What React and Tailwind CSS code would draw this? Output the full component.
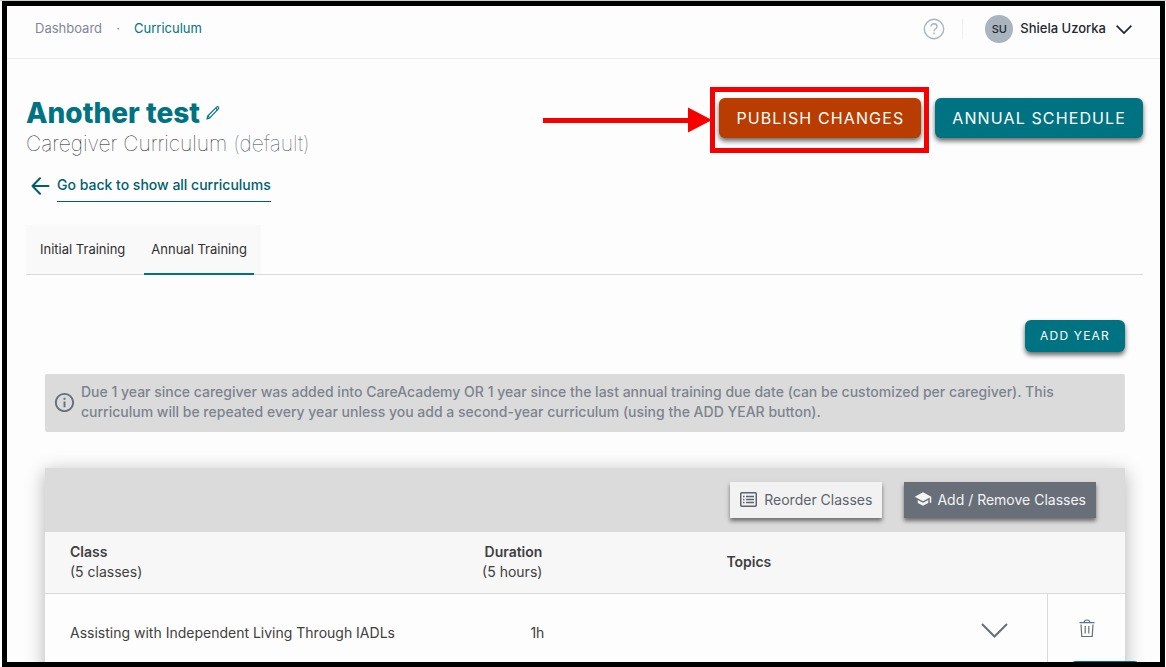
import { useState } from "react";
import { MdInfoOutline, MdSchool } from "react-icons/md";

const TABS = ["Initial Training", "Annual Training"];

const CLASSES = [
  { title: "Assisting with Independent Living Through IADLs", duration: "1h" },
];

function HelpIcon() {
  return (
    <svg width="22" height="22" viewBox="0 0 22 22" fill="none" stroke="currentColor" strokeWidth="1.4" aria-hidden="true">
      <circle cx="11" cy="11" r="9.7" />
      <path d="M8 8.6c0-1.8 1.3-2.9 3-2.9s3 1.1 3 2.7c0 1.4-.8 2-1.7 2.6-.9.6-1.3 1-1.3 2.2" />
      <path d="M11 14.6v1.6" />
    </svg>
  );
}

function ChevronIcon({ className }) {
  return (
    <svg viewBox="0 0 27 15" fill="none" stroke="currentColor" strokeWidth="2" className={className} aria-hidden="true">
      <path d="M1 1l12.5 12.5L26 1" />
    </svg>
  );
}

function PencilIcon() {
  return (
    <svg width="14" height="14" viewBox="0 0 14 14" fill="none" stroke="currentColor" strokeWidth="1.1" strokeLinejoin="round" aria-hidden="true">
      <path d="M.9 13.1l.9-3.1L10.6 1.2c.6-.6 1.3-.6 1.8-.1s.5 1.2-.1 1.8L3.8 11.9z" />
      <path d="M1.8 10l2 1.9M9.7 2.1l1.9 1.9" />
    </svg>
  );
}

function BackIcon() {
  return (
    <svg width="19" height="18" viewBox="0 0 19 18" fill="none" stroke="currentColor" strokeWidth="2" strokeLinecap="round" strokeLinejoin="round" aria-hidden="true">
      <path d="M17.5 9H1.5M9 1.3L1.5 9 9 16.7" />
    </svg>
  );
}

function ListIcon() {
  return (
    <svg width="17" height="15" viewBox="0 0 17 15" fill="none" stroke="currentColor" className="-mt-0.5" aria-hidden="true">
      <rect x=".75" y=".75" width="15.5" height="13.5" rx="1" strokeWidth="1.5" />
      <path d="M6 4.5h8M6 7.5h8M6 10.5h8M3 4.5h1.5M3 7.5h1.5M3 10.5h1.5" strokeWidth="1.4" />
    </svg>
  );
}

function TrashIcon() {
  return (
    <svg width="16" height="19" viewBox="0 0 16 19" fill="none" stroke="currentColor" strokeWidth="1.2" aria-hidden="true">
      <path d="M.5 3.7h15M5 3.5C5.2 1.9 6 1 8 1s2.8.9 3 2.5" />
      <path d="M2 5.5l.8 12h10.4l.8-12" />
      <path d="M6.2 7v7.5M9.8 7v7.5" />
    </svg>
  );
}

function TopBar() {
  return (
    <header className="flex h-[53px] shrink-0 items-center justify-between border-b border-[#ececee] pr-7 pb-1.5 pl-7 text-[13px]">
      <nav className="flex items-center">
        <a href="#dashboard" className="text-[#7f8898]">Dashboard</a>
        <span className="w-8 text-center text-[#7f8898]">·</span>
        <a href="#curriculum" className="text-[#007382]">Curriculum</a>
      </nav>
      <div className="flex items-center font-medium">
        <button type="button" aria-label="Help" className="text-[#a9b4c0]">
          <HelpIcon />
        </button>
        <div className="mr-[22px] ml-[17px] h-5 w-px bg-[#ebedf0]"></div>
        <button type="button" className="flex items-center text-[#23282f]">
          <span className="mr-[7px] flex size-7 items-center justify-center rounded-full bg-[#a9b4bf] text-[11px]">SU</span>
          <span>Shiela Uzorka</span>
          <ChevronIcon className="ml-2.5 h-[9px] w-4 [stroke-width:3]" />
        </button>
      </div>
    </header>
  );
}

// red outline and arrow pointing at the publish button
function Callout() {
  return (
    <div className="pointer-events-none absolute -top-[11px] -right-2 -bottom-[15px] -left-[9px] border-[5px] border-[#f60000]">
      <svg width="169" height="26" viewBox="0 0 169 26" fill="#f60000" className="absolute top-[15px] -left-[172px] max-w-none" aria-hidden="true">
        <path d="M0 11h145V.5L169 13l-24 12.5V16H0z" />
      </svg>
    </div>
  );
}

function PageHeading() {
  return (
    <div className="flex items-start justify-between">
      <div>
        <h1 className="flex items-center gap-1.5 text-[28px] leading-9 font-extrabold text-[#007382]">
          Another test
          <button type="button" aria-label="Edit name">
            <PencilIcon />
          </button>
        </h1>
        <p className="text-[21px] leading-[26px] font-thin text-[#101010]">
          Caregiver Curriculum <span className="text-[#404855]">(default)</span>
        </p>
        <a href="#curriculums" className="mt-[18px] ml-[5px] flex w-fit gap-[7px] text-[#005f6e]">
          <span className="mt-0.5"><BackIcon /></span>
          <span className="border-b border-[#005f6e] pb-[6px] text-sm font-medium">Go back to show all curriculums</span>
        </a>
      </div>
      <div className="mt-[3px] flex gap-[14px] text-base text-white">
        <div className="relative">
          <button type="button" className="h-10 rounded-md bg-[#b93c00] px-[17px] tracking-[0.07em] shadow-[0_3px_5px_rgba(0,0,0,0.6)]">
            PUBLISH CHANGES
          </button>
          <Callout />
        </div>
        <button type="button" className="h-10 rounded-md bg-[#007382] px-[17px] tracking-[0.07em] shadow-[0_3px_5px_rgba(0,0,0,0.6)]">
          ANNUAL SCHEDULE
        </button>
      </div>
    </div>
  );
}

function Tabs({ active, onSelect }) {
  return (
    <div className="mt-[23px] border-b border-[#dadada]">
      <div role="tablist" className="flex h-[49px] w-fit gap-3 bg-[#f9f9f9] px-[7px]">
        {TABS.map((tab) => (
          <button
            key={tab}
            type="button"
            role="tab"
            aria-selected={tab === active}
            onClick={() => onSelect(tab)}
            className={`-mb-px border-b-2 px-[7px] pt-0.5 text-[13px] text-[#303030] ${tab === active ? "border-[#007382]" : "border-transparent"}`}
          >
            {tab}
          </button>
        ))}
      </div>
    </div>
  );
}

function ClassTable() {
  return (
    <section className="mt-9 bg-[#fdfdfd] shadow-[0_4px_18px_rgba(0,0,0,0.3)]">
      <div className="flex h-16 items-center justify-end gap-[22px] bg-[#dbdbdb] pr-[29px] text-sm">
        <button type="button" className="flex h-9 items-center gap-[7px] bg-[#f2f2f2] px-2.5 text-[#5c636e] shadow-[0_3px_4px_rgba(0,0,0,0.5)]">
          <ListIcon />
          Reorder Classes
        </button>
        <button type="button" className="flex h-9 items-center gap-[5px] bg-[#686f79] px-2.5 text-[#f4f4f4] shadow-[0_3px_4px_rgba(0,0,0,0.5)]">
          <MdSchool size={18} className="-mt-0.5" />
          Add / Remove Classes
        </button>
      </div>
      <table className="w-full table-fixed text-left text-sm text-[#404040]">
        <thead className="border-b border-[#dadada] bg-[#f7f7f7]">
          <tr className="h-[61px]">
            <th className="w-[38%] pl-[25px] font-semibold">
              Class
              <div className="font-normal">(5 classes)</div>
            </th>
            <th className="w-1/4 font-semibold">
              <div className="w-[87px] text-right">
                Duration
                <div className="font-normal">(5 hours)</div>
              </div>
            </th>
            <th className="pl-px font-semibold">Topics</th>
            <td className="w-[78px]"></td>
          </tr>
        </thead>
        <tbody>
          {CLASSES.map((item) => (
            <tr key={item.title} className="h-20 border-b border-[#dadada]">
              <td className="pl-[25px]">{item.title}</td>
              <td>
                <div className="w-[89px] text-right">{item.duration}</div>
              </td>
              <td className="pr-[39px] text-right">
                <button type="button" aria-label="Show topics" className="text-[#686f7a]">
                  <ChevronIcon className="h-[15px] w-[27px]" />
                </button>
              </td>
              <td className="border-l border-[#dadada] pb-1 pl-0.5 text-center">
                <button type="button" aria-label="Remove class" className="text-[#686f7a]">
                  <TrashIcon />
                </button>
              </td>
            </tr>
          ))}
        </tbody>
      </table>
    </section>
  );
}

export default function App() {
  const [tab, setTab] = useState("Annual Training");

  return (
    <div className="h-screen border-t border-[#c9d3cd] bg-white pr-px pl-0.5 font-['Inter',sans-serif]">
      <div className="relative flex h-full flex-col overflow-hidden border-[5px] border-black bg-[#fdfdfd]">
        <TopBar />
        <main className="pt-9 pr-[17px] pl-[19px]">
          <PageHeading />
          <Tabs active={tab} onSelect={setTab} />
          <div className="mt-[45px] mr-[18px] ml-[19px]">
            <div className="flex justify-end">
              <button type="button" className="h-8 rounded-md bg-[#007382] px-[15px] text-xs tracking-widest text-white shadow-[0_3px_5px_rgba(0,0,0,0.6)]">
                ADD YEAR
              </button>
            </div>
            <div className="mt-[22px] flex items-center gap-[5px] rounded-xs bg-[#dbdbdb] px-2 text-[#686f7a]">
              <MdInfoOutline size={23} className="-mt-0.5 shrink-0" />
              <p className="pt-2 pb-2.5 text-sm font-medium text-[#7b838f]">
                Due 1 year since caregiver was added into CareAcademy OR 1 year since the last annual training due date (can
                be customized per caregiver). This curriculum will be repeated every year unless you add a second-year
                curriculum (using the ADD YEAR button).
              </p>
            </div>
            <ClassTable />
          </div>
        </main>
        <button type="button" aria-label="Open chat" className="absolute right-5 -bottom-[49px] h-[50px] w-[70px] rounded-md bg-[#007382]"></button>
      </div>
    </div>
  );
}
